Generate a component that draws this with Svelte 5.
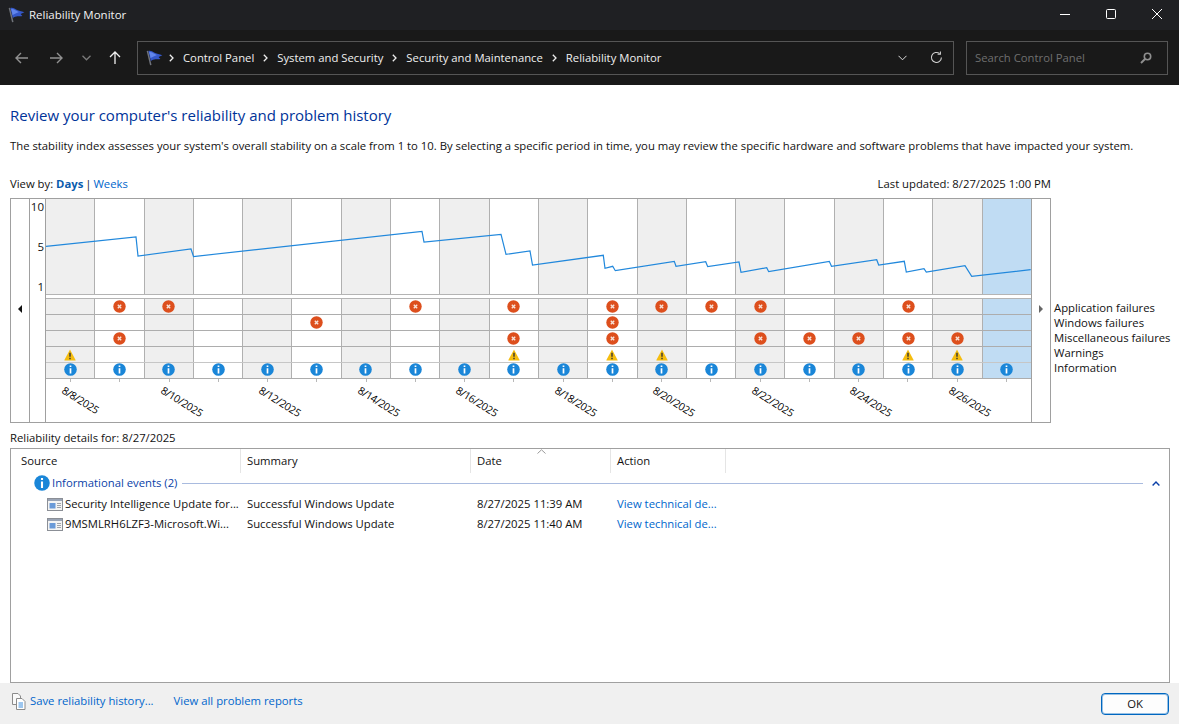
<script>
	const days = Array.from({ length: 20 }, (_, i) => i);
	const dateLabels = [8, 10, 12, 14, 16, 18, 20, 22, 24, 26];

	const rows = [
		{ kind: 'err', cols: [1, 2, 7, 9, 11, 12, 13, 14, 17] },
		{ kind: 'err', cols: [5, 11] },
		{ kind: 'err', cols: [1, 9, 11, 14, 15, 16, 17, 18] },
		{ kind: 'warn', cols: [0, 9, 11, 12, 17, 18] },
		{ kind: 'info', cols: days }
	];

	const legend = ['Application failures', 'Windows failures', 'Miscellaneous failures', 'Warnings', 'Information'];
	const crumbs = ['Control Panel', 'System and Security', 'Security and Maintenance', 'Reliability Monitor'];
	const headers = ['Source', 'Summary', 'Date', 'Action'];

	const events = [
		{ source: 'Security Intelligence Update for...', summary: 'Successful Windows Update', date: '8/27/2025 11:39 AM' },
		{ source: '9MSMLRH6LZF3-Microsoft.Wi...', summary: 'Successful Windows Update', date: '8/27/2025 11:40 AM' }
	];

	// stability line, in plot coordinates (plot origin 46,199)
	const line = [
		[46, 246.4], [136, 237], [138, 256], [191, 249], [193.5, 256.5], [422, 231.5], [424, 242], [501, 234.3],
		[506, 254.3], [530, 251], [532.5, 265], [603.3, 255.3], [605, 268.3], [612.7, 266.3], [615.3, 270.7],
		[674.3, 261.3], [676, 266.3], [705.7, 261.7], [707.7, 266.7], [739, 262], [741, 272.3], [766.7, 267.7],
		[768.7, 271.7], [829.3, 261.3], [831.5, 266.3], [876.7, 259.7], [878.7, 265], [904.3, 261.3], [906.3, 272],
		[924, 268.7], [926.3, 272], [965, 265.7], [971.7, 276.3], [1030.7, 269.7]
	].map(([x, y]) => `${x - 46},${y - 199}`).join(' ');
</script>

{#snippet flag()}
	<svg class="flag" width="17" height="16" viewBox="0 0 17 16">
		<path d="M1.4 .8 L4.8 15.2" stroke="#70737b" stroke-width="1.5" fill="none"/>
		<path d="M2.4 1 C5 .4 7 1.8 9 3 C11 4 13 4 16.4 5.2 L12.6 7 L14.4 9 C11 9.6 8 8.4 4.8 11 Z" fill="#3558c9"/>
		<path d="M3.2 2 C5 1.6 6.6 2.6 8.4 3.8 C9.4 4.4 10 4.8 11 5 L7.6 6.6 L4.6 8 Z" fill="#6286ec"/>
	</svg>
{/snippet}

{#snippet errIcon()}
	<svg width="13" height="13" viewBox="0 0 13 13">
		<circle cx="6.5" cy="6.5" r="6.2" fill="#dd4f1d"/>
		<path d="M4.8 4.8 L8.2 8.2 M8.2 4.8 L4.8 8.2" stroke="#f7e2d8" stroke-width="1.4"/>
	</svg>
{/snippet}

{#snippet warnIcon()}
	<svg width="12" height="12" viewBox="0 0 12 12">
		<path d="M6 .6 L11.6 11 Q11.8 11.6 11 11.6 L1 11.6 Q.2 11.6 .4 11 Z" fill="#f5bd0f"/>
		<path d="M6 3.8 V7.8 M6 8.8 V10.2" stroke="#333" stroke-width="1.4"/>
	</svg>
{/snippet}

{#snippet infoIcon(size = 13)}
	<svg width={size} height={size} viewBox="0 0 13 13">
		<circle cx="6.5" cy="6.5" r="6.3" fill="#1a86d8"/>
		<path d="M6.5 2.4 V4 M6.5 5.2 V10.6" stroke="#fff" stroke-width="1.7"/>
	</svg>
{/snippet}

<div class="window">
	<header class="titlebar">
		<div class="title">
			{@render flag()}
			<span>Reliability Monitor</span>
		</div>
		<div class="controls">
			<svg width="10" height="10" viewBox="0 0 10 10"><path d="M0 5.5 H10" stroke="#fff"/></svg>
			<svg width="10" height="10" viewBox="0 0 10 10"><rect x=".5" y=".5" width="9" height="9" rx="1" fill="none" stroke="#fff"/></svg>
			<svg width="10" height="10" viewBox="0 0 10 10"><path d="M0 0 L10 10 M10 0 L0 10" stroke="#fff"/></svg>
		</div>
	</header>

	<nav class="navbar">
		<div class="nav-buttons">
			<svg class="back" width="13" height="12" viewBox="0 0 13 12"><path d="M13 6 H1 M6 1 L1 6 L6 11" stroke="#919191" stroke-width="1.4" fill="none"/></svg>
			<svg class="forward" width="13" height="12" viewBox="0 0 13 12"><path d="M0 6 H12 M7 1 L12 6 L7 11" stroke="#919191" stroke-width="1.4" fill="none"/></svg>
			<svg width="9" height="6" viewBox="0 0 9 6"><path d="M.5 .8 L4.5 4.8 L8.5 .8" stroke="#7a7a7a" stroke-width="1.3" fill="none"/></svg>
			<svg width="12" height="13" viewBox="0 0 12 13"><path d="M6 13 V1 M1 6 L6 1 L11 6" stroke="#f0f0f0" stroke-width="1.3" fill="none"/></svg>
		</div>
		<div class="address">
			<span class="address-flag">{@render flag()}</span>
			{#each crumbs as crumb}
				<svg class="crumb-sep" width="5" height="8" viewBox="0 0 5 8"><path d="M.8 .8 L4 4 L.8 7.2" stroke="#eee" stroke-width="1.3" fill="none"/></svg>
				<span class="crumb">{crumb}</span>
			{/each}
			<span class="spacer"></span>
			<svg class="addr-down" width="9" height="6" viewBox="0 0 9 6"><path d="M.5 .8 L4.5 4.8 L8.5 .8" stroke="#ddd" fill="none"/></svg>
			<svg class="refresh" width="13" height="13" viewBox="0 0 13 13"><path d="M11.4 6.5 A5 5 0 1 1 9.6 2.6" stroke="#d0d0d0" stroke-width="1.1" fill="none"/><path d="M10.4 .4 V3.2 H7.6" stroke="#d0d0d0" stroke-width="1.1" fill="none"/></svg>
		</div>
		<div class="search">
			<span>Search Control Panel</span>
			<svg width="12" height="12" viewBox="0 0 12 12"><circle cx="7.5" cy="4.5" r="3.2" stroke="#8f8f8f" stroke-width="1.6" fill="none"/><path d="M5 7 L1 11" stroke="#8f8f8f" stroke-width="2"/></svg>
		</div>
	</nav>

	<main class="content">
		<h1>Review your computer's reliability and problem history</h1>
		<p class="intro">The stability index assesses your system's overall stability on a scale from 1 to 10. By selecting a specific period in time, you may review the specific hardware and software problems that have impacted your system.</p>

		<div class="viewby">
			<span>View by: <a class="active" href="#days">Days</a> <span class="sep">|</span> <a href="#weeks">Weeks</a></span>
			<span>Last updated: 8/27/2025 1:00 PM</span>
		</div>

		<div class="chart-row">
			<div class="chart">
				<div class="side left"><span class="arrow-left"></span></div>
				<div class="yaxis"><span>10</span><span>5</span><span>1</span></div>
				<div class="plot">
					<div class="graph">
						{#each days as i}
							<div class="cell" class:shade={i % 2 === 0} class:selected={i === 19}></div>
						{/each}
						<svg class="stability" width="985" height="96"><polyline points={line} fill="none" stroke="#2188dc" stroke-width="1.2"/></svg>
					</div>
					<div class="band"></div>
					{#each rows as row, r}
						<div class="event-row" class:last={r === 4}>
							{#each days as i}
								<div class="cell" class:shade={i % 2 === 0} class:selected={i === 19}>
									{#if row.cols.includes(i)}
										{#if row.kind === 'err'}{@render errIcon()}
										{:else if row.kind === 'warn'}{@render warnIcon()}
										{:else}{@render infoIcon()}{/if}
									{/if}
								</div>
							{/each}
						</div>
					{/each}
					<div class="dates">
						{#each days as i}
							<div class="date-cell">
								<i class="tick"></i>
								{#if i % 2 === 0}
									<span class="date">8/{dateLabels[i / 2]}/2025</span>
								{/if}
							</div>
						{/each}
					</div>
				</div>
				<div class="side right"><span class="arrow-right"></span></div>
			</div>
			<ul class="legend">
				{#each legend as item}<li>{item}</li>{/each}
			</ul>
		</div>

		<div class="details-label">Reliability details for: 8/27/2025</div>

		<section class="details">
			<div class="thead">
				{#each headers as h}
					<div class="th">{h}</div>
				{/each}
				<svg class="sort" width="9" height="5" viewBox="0 0 9 5"><path d="M.5 4.5 L4.5 .8 L8.5 4.5" stroke="#9a9a9a" fill="none"/></svg>
			</div>
			<div class="group">
				{@render infoIcon(16)}
				<span class="group-name">Informational events (2)</span>
				<span class="group-line"></span>
				<svg width="8" height="5" viewBox="0 0 8 5"><path d="M.6 4.4 L4 1 L7.4 4.4" stroke="#0a3fa8" stroke-width="1.4" fill="none"/></svg>
			</div>
			<div class="events">
				{#each events as ev}
					<div class="event">
						<div class="td source">
							<svg width="16" height="13" viewBox="0 0 16 13">
								<rect x=".5" y=".5" width="15" height="12" fill="#f4f4f4" stroke="#8b8f96"/>
								<rect x="1" y="1" width="14" height="2" fill="#9aa4b5"/>
								<rect x="2.5" y="5" width="6" height="5.5" fill="#6a9ad8"/>
								<path d="M10 5.5 H14 M10 7.5 H14 M10 9.5 H14" stroke="#a0a4ab"/>
							</svg>
							<span>{ev.source}</span>
						</div>
						<div class="td">{ev.summary}</div>
						<div class="td">{ev.date}</div>
						<div class="td"><a href="#tech">View technical de...</a></div>
					</div>
				{/each}
			</div>
		</section>
	</main>

	<footer class="footer">
		<svg class="copy" width="15" height="17" viewBox="0 0 15 17">
			<path d="M1.5 .5 H7 L9.5 3 V11.5 H1.5 Z" fill="#fafafa" stroke="#8c8c8c"/>
			<path d="M5.5 5.5 H11 L14 8.5 V16.5 H5.5 Z" fill="#fff" stroke="#8c8c8c"/>
			<path d="M7.5 10 H12 M7.5 12 H12 M7.5 14 H12" stroke="#3d8fe0"/>
		</svg>
		<a href="#save">Save reliability history...</a>
		<a href="#reports">View all problem reports</a>
		<span class="spacer"></span>
		<button>OK</button>
	</footer>
</div>

<style>
	:global(body) {
		margin: 0;
		background: #fff;
	}

	.window {
		width: 1179px;
		height: 724px;
		display: flex;
		flex-direction: column;
		overflow: hidden;
		font: 11.3px/16px "Open Sans", sans-serif;
		color: #111;
	}

	a {
		color: #0066cc;
		text-decoration: none;
	}

	.spacer {
		flex: 1;
	}

	.titlebar {
		height: 30px;
		flex: none;
		display: flex;
		align-items: center;
		justify-content: space-between;
		background: #1f2023;
		color: #f2f2f2;
	}

	.title {
		display: flex;
		align-items: center;
		gap: 4px;
		padding-left: 8px;
		font-size: 11.5px;
	}

	.controls {
		display: flex;
		gap: 36px;
		padding-right: 17px;
		margin-bottom: 2px;
	}

	.navbar {
		height: 55px;
		flex: none;
		display: flex;
		align-items: center;
		background: #191919;
		padding-right: 11px;
	}

	.nav-buttons {
		width: 137px;
		flex: none;
		display: flex;
		align-items: center;
		gap: 18px;
		padding-left: 15px;
		box-sizing: border-box;
	}

	.back {
		margin-right: 4px;
	}

	.forward {
		margin-right: 1px;
	}

	.address {
		width: 817px;
		height: 34px;
		flex: none;
		box-sizing: border-box;
		display: flex;
		align-items: center;
		border: 1px solid #555;
		color: #f0f0f0;
		padding: 0 10px 0 8px;
	}

	.address-flag {
		display: flex;
		margin-right: 6px;
	}

	.crumb-sep {
		margin-right: 9px;
	}

	.crumb {
		margin-right: 9px;
	}

	.refresh {
		margin-left: 23px;
	}

	.search {
		width: 202px;
		height: 34px;
		margin-left: 12px;
		flex: none;
		box-sizing: border-box;
		display: flex;
		align-items: center;
		justify-content: space-between;
		border: 1px solid #555;
		color: #6f6f6f;
		padding: 0 15px 0 8px;
	}

	.content {
		flex: 1;
		display: flex;
		flex-direction: column;
		min-height: 0;
		background: #fff;
	}

	h1 {
		margin: 20px 0 0 10px;
		font-size: 15px;
		line-height: 20px;
		font-weight: 400;
		color: #003399;
	}

	.intro {
		margin: 13px 0 0 10px;
		white-space: nowrap;
	}

	.viewby {
		width: 1041px;
		margin: 22px 0 0 10px;
		display: flex;
		justify-content: space-between;
	}

	.active {
		font-weight: 700;
		color: #0b5cad;
	}

	.sep {
		margin: 0 -1px;
	}

	.chart-row {
		display: flex;
		margin: 6px 0 0 10px;
	}

	.chart {
		width: 1041px;
		height: 225px;
		flex: none;
		box-sizing: border-box;
		display: flex;
		border: 1px solid #a0a0a0;
	}

	.side {
		width: 19px;
		flex: none;
		display: flex;
		justify-content: center;
		padding-top: 106px;
		box-sizing: border-box;
	}

	.side.left {
		border-right: 1px solid #a0a0a0;
	}

	.side.right {
		border-left: 1px solid #a0a0a0;
	}

	.arrow-left,
	.arrow-right {
		width: 0;
		height: 0;
		border-style: solid;
		border-color: transparent;
		border-width: 4px 0;
	}

	.arrow-left {
		border-right: 4px solid #111;
	}

	.arrow-right {
		border-left: 4px solid #666;
	}

	.yaxis {
		width: 16px;
		flex: none;
		box-sizing: border-box;
		display: flex;
		flex-direction: column;
		align-items: flex-end;
		gap: 24px;
		padding: 0 1px 0 0;
		border-right: 1px solid #a0a0a0;
		font-size: 11.5px;
	}

	.plot {
		width: 985px;
		flex: none;
		display: flex;
		flex-direction: column;
	}

	.graph {
		position: relative;
		height: 95px;
		display: flex;
		border-bottom: 1px solid #b4b4b4;
	}

	.stability {
		position: absolute;
		left: 0;
		top: 0;
	}

	.band {
		height: 3px;
		border-bottom: 1px solid #b4b4b4;
	}

	.cell {
		flex: 1;
		display: flex;
		align-items: center;
		justify-content: center;
		border-right: 1px solid #b0b0b0;
		background: #fff;
	}

	.cell.shade {
		background: #efefef;
	}

	.cell.selected {
		background: #c0dcf3;
		border-right: none;
	}

	.event-row {
		height: 15px;
		display: flex;
		border-bottom: 1px solid #adadad;
	}

	.event-row.last {
		border-top: 1px solid #c6c6c6;
		margin-top: -1px;
	}

	.event-row.last .cell svg {
		margin-bottom: 2px;
	}

	.dates {
		flex: 1;
		display: flex;
	}

	.date-cell {
		flex: 1;
		position: relative;
		display: flex;
		justify-content: center;
	}

	.tick {
		width: 1px;
		height: 3px;
		background: #b8b8b8;
	}

	.date {
		position: absolute;
		left: 17px;
		top: 4px;
		transform: rotate(32deg);
		transform-origin: 0 50%;
		white-space: nowrap;
		font-size: 10.5px;
		letter-spacing: -0.3px;
		line-height: 12px;
		color: #000;
	}

	.legend {
		list-style: none;
		margin: 102px 0 0 3px;
		padding: 0;
		line-height: 15px;
		color: #111;
		white-space: nowrap;
	}

	.details-label {
		margin: 7px 0 0 10px;
	}

	.details {
		flex: 1;
		margin: 2px 9px 0 10px;
		min-height: 0;
		border: 1px solid #a0a0a0;
		display: flex;
		flex-direction: column;
	}

	.thead {
		position: relative;
		height: 24px;
		flex: none;
		display: grid;
		grid-template-columns: 230px 230px 140px 115px;
		align-items: center;
	}

	.th {
		height: 24px;
		line-height: 24px;
		padding-left: 10px;
		box-sizing: border-box;
		border-right: 1px solid #e5e5e5;
	}

	.th + .th {
		padding-left: 6px;
	}

	.sort {
		position: absolute;
		left: 526px;
		top: 0;
	}

	.group {
		height: 20px;
		display: flex;
		align-items: center;
		padding: 0 9px 0 23px;
		color: #0a3fa8;
	}

	.group-name {
		margin-left: 2px;
	}

	.group-line {
		flex: 1;
		height: 1px;
		background: #a9bbdf;
		margin: 0 9px 0 5px;
	}

	.events {
		margin-top: 1px;
	}

	.event {
		height: 20px;
		display: grid;
		grid-template-columns: 230px 230px 140px 115px;
		align-items: center;
		white-space: nowrap;
	}

	.td {
		padding-left: 6px;
		overflow: hidden;
	}

	.td.source {
		display: flex;
		align-items: center;
		gap: 2px;
		padding-left: 36px;
	}

	.td.source svg {
		flex: none;
	}

	.footer {
		height: 41px;
		flex: none;
		display: flex;
		align-items: center;
		background: #f0f0f0;
		padding: 0 10px 0 11px;
	}

	.footer a {
		margin: 0 20px 5px 0;
	}

	.copy {
		margin: 0 4px 5px 0;
	}

	button {
		width: 68px;
		height: 22px;
		margin-top: 1px;
		padding: 0;
		font: inherit;
		color: #111;
		background: #fdfdfd;
		border: 1px solid #0067c0;
		border-radius: 4px;
		box-shadow: inset 0 0 0 1px rgba(0, 103, 192, 0.4);
	}
</style>
